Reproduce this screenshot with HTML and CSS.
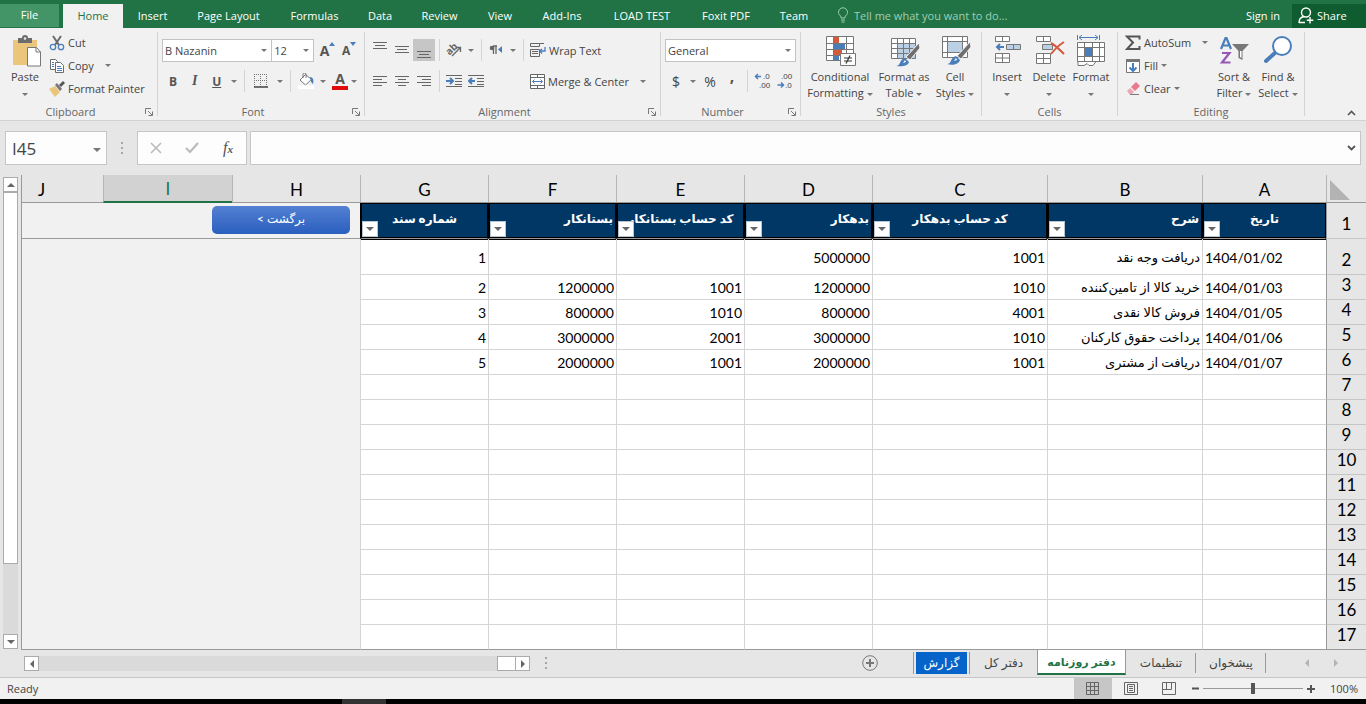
FILE: index.html
```
<!DOCTYPE html>
<html lang="en">
<head>
    <meta charset="utf-8">
    <meta name="viewport" content="width=device-width, initial-scale=1.0">
    <title>دفتر روزنامه</title>
    <link rel="stylesheet" href="styles.css">
</head>
<body>
    <nav class="tabs">
        <button class="file">File</button>
        <button class="on">Home</button>
        <button>Insert</button>
        <button>Page Layout</button>
        <button>Formulas</button>
        <button>Data</button>
        <button>Review</button>
        <button>View</button>
        <button>Add-Ins</button>
        <button>LOAD TEST</button>
        <button>Foxit PDF</button>
        <button>Team</button>
        <label class="tellme">
            <svg width="12" height="16" viewBox="0 0 12 16" fill="none" stroke="#9fd0b3"><path d="M4 11V9.500C2.500 8.500 1.500 7 1.500 5.300a4.500 4.500 0 0 1 9 0C10.500 7 9.500 8.500 8 9.500V11zM4 13h4M4.500 15h3"/></svg>
            <input type="text" placeholder="Tell me what you want to do...">
        </label>
        <a href="#" class="signin">Sign in</a>
        <button class="share">
            <svg width="16" height="17" viewBox="0 0 16 17" fill="none" stroke="#fff" stroke-width="1.400"><circle cx="8" cy="5.500" r="4.500"/><path d="M1 16c0-4 2-6 5-6.500M1 15.500h6M12 10v6.500M8.800 13.200h6.500"/></svg>
            Share
        </button>
    </nav>

    <div class="ribbon">
        <section class="group g-clip">
            <div class="body">
                <button class="big paste">
                    <svg width="32" height="32" viewBox="0 0 32 32"><path d="M4 5h24v25H4z" fill="#ecc57d"/><path d="M9 3h4a3 3 0 0 1 6 0h4v5H9z" fill="#6d6d6d"/><circle cx="16" cy="3.500" r="1.200" fill="#f1f1f1"/><path d="M18.500 12.500h9l4 4.500v14h-13z" fill="#fff" stroke="#777"/><path d="M27 12.500V17h4.500" fill="none" stroke="#777"/></svg>
                    Paste<br><i class="caret"></i>
                </button>
                <div class="stack">
                    <button class="line"><svg width="16" height="16" viewBox="0 0 16 16" fill="none"><path d="M4 1l6 9M12 1L6 10" stroke="#6b6b6b" stroke-width="2"/><circle cx="4" cy="12" r="2.700" stroke="#4a7ebb" stroke-width="1.300"/><circle cx="12" cy="12" r="2.700" stroke="#4a7ebb" stroke-width="1.300"/></svg>Cut</button>
                    <button class="line"><svg width="16" height="16" viewBox="0 0 16 16" fill="#fff" stroke="#6b6b6b"><path d="M1.500 1.500h5l2 2v8h-7z"/><path d="M6.500 4.500h5l3 3v7h-8z"/><path d="M3 4.500h2M3 6.500h2M3 8.500h2M8 8.500h4M8 10.500h5M8 12.500h5" stroke="#4a7ebb"/></svg>Copy <i class="caret wide"></i></button>
                    <button class="line"><svg width="16" height="16" viewBox="0 0 16 16"><path d="M0 8l6-3 5 6-5 5z" fill="#ecc57d"/><path d="M6 4l2-2 5 6-2 2z" fill="#777"/><path d="M10 4l4-4 2 2-4 4z" fill="#555"/></svg>Format Painter</button>
                </div>
            </div>
            <h2>Clipboard</h2>
            <button class="launch" aria-label="Clipboard options"><svg width="8" height="8" viewBox="0 0 8 8" fill="none" stroke="#777"><path d="M.5 6V.5H6M3 3l4 4M7.500 3.500v4h-4"/></svg></button>
        </section>

        <section class="group g-font">
            <div class="body rows">
                <div class="row">
                    <span class="pick name"><select aria-label="Font"><option>B Nazanin</option></select></span>
                    <span class="pick size"><select aria-label="Font size"><option>12</option></select></span>
                    <button class="ic grow" aria-label="Increase font size"><b>A</b><svg width="6" height="4" viewBox="0 0 6 4"><path d="M0 4l3-4 3 4z" fill="#4a7ebb"/></svg></button>
                    <button class="ic shrink" aria-label="Decrease font size"><b>A</b><svg width="6" height="4" viewBox="0 0 6 4"><path d="M0 0l3 4 3-4z" fill="#4a7ebb"/></svg></button>
                </div>
                <div class="row">
                    <button class="ic glyph"><b>B</b></button>
                    <button class="ic glyph italic"><b><em>I</em></b></button>
                    <button class="ic glyph"><b><u>U</u></b></button>
                    <button class="drop" aria-label="Underline styles"><i class="caret"></i></button>
                    <span class="sep"></span>
                    <button class="ic wider" aria-label="Borders"><svg width="14" height="14" viewBox="0 0 14 14" fill="none" stroke="#777"><path d="M.5 0v13M6.500 0v13M12.500 0v13M0 .5h13M0 6.500h13" stroke-dasharray="1 1"/><path d="M0 13h14" stroke="#444" stroke-width="1.500"/></svg></button>
                    <button class="drop" aria-label="Border styles"><i class="caret"></i></button>
                    <span class="sep"></span>
                    <button class="ic fill" aria-label="Fill color"><svg width="17" height="16" viewBox="0 0 17 16"><path d="M7.500 1.500l6 5-6 5.500-5.500-5z" fill="#fff" stroke="#777"/><path d="M5 5V1.500a1.500 1.500 0 0 1 3 0V5" fill="none" stroke="#777"/><path d="M12 4c3 0 4 3 3 7-2-1-2-3-3-7z" fill="#4a7ebb"/><path d="M0 12.500h16V16H0z" fill="#fff"/></svg></button>
                    <button class="drop" aria-label="Fill colors"><i class="caret"></i></button>
                    <button class="ic color" aria-label="Font color"><b>A</b></button>
                    <button class="drop" aria-label="Font colors"><i class="caret"></i></button>
                </div>
            </div>
            <h2>Font</h2>
            <button class="launch" aria-label="Font options"><svg width="8" height="8" viewBox="0 0 8 8" fill="none" stroke="#777"><path d="M.5 6V.5H6M3 3l4 4M7.500 3.500v4h-4"/></svg></button>
        </section>

        <section class="group g-align">
            <div class="body rows">
                <div class="row">
                    <button class="ic" aria-label="Top align"><svg width="14" height="16" viewBox="0 0 14 16" stroke="#666"><path d="M0 .5h14M2 3.500h10M0 6.500h14"/></svg></button>
                    <button class="ic" aria-label="Middle align"><svg width="14" height="16" viewBox="0 0 14 16" stroke="#666"><path d="M0 4.500h14M2 7.500h10M0 10.500h14"/></svg></button>
                    <button class="ic on" aria-label="Bottom align"><svg width="14" height="16" viewBox="0 0 14 16" stroke="#666"><path d="M0 9.500h14M2 12.500h10M0 15.500h14"/></svg></button>
                    <span class="sep"></span>
                    <button class="ic" aria-label="Orientation"><svg width="20" height="20" viewBox="0 0 20 20"><text x="5" y="13" transform="rotate(-45 7 10)" font-size="10" font-weight="bold" fill="#666" text-anchor="middle" dx="3">ab</text><path d="M8 16l8-8M12 7.500h4.500V12" fill="none" stroke="#666" stroke-width="1.300"/></svg></button>
                    <button class="drop" aria-label="Orientations"><i class="caret"></i></button>
                    <span class="sep"></span>
                    <button class="ic" aria-label="Text direction"><svg width="14" height="12" viewBox="0 0 14 12"><path d="M4 2h4M4.500 2v8M7 2v8" stroke="#666" stroke-width="1.300"/><circle cx="3" cy="4" r="2.300" fill="#666"/><path d="M13 2v7L9 5.500z" fill="#4a7ebb"/></svg></button>
                    <button class="drop" aria-label="Text directions"><i class="caret"></i></button>
                    <span class="sep"></span>
                    <button class="line wrap"><svg width="16" height="16" viewBox="0 0 16 16" fill="none" stroke="#666"><path d="M.5 1.500h9v3h-9zM.5 7.500h9v7h-9zM2 9.500h6M2 11.500h6M9.500 1.500H14"/><path d="M15 5v4h-5M12 7l-2.500 2L12 11.500" stroke="#4a7ebb" stroke-width="1.300"/></svg>Wrap Text</button>
                </div>
                <div class="row">
                    <button class="ic" aria-label="Align left"><svg width="14" height="12" viewBox="0 0 14 12" stroke="#666"><path d="M0 1.500h14M0 4.500h9M0 7.500h14M0 10.500h9"/></svg></button>
                    <button class="ic" aria-label="Center"><svg width="14" height="12" viewBox="0 0 14 12" stroke="#666"><path d="M0 1.500h14M3 4.500h8M0 7.500h14M3 10.500h8"/></svg></button>
                    <button class="ic" aria-label="Align right"><svg width="14" height="12" viewBox="0 0 14 12" stroke="#666"><path d="M0 1.500h14M5 4.500h9M0 7.500h14M5 10.500h9"/></svg></button>
                    <span class="sep"></span>
                    <button class="ic" aria-label="Decrease indent"><svg width="16" height="14" viewBox="0 0 16 14" stroke="#666" fill="none"><path d="M0 1.500h16M9 4.500h7M9 7.500h7M9 10.500h7M0 12.500h16"/><path d="M0 7h6M4 4l3 3-3 3" stroke="#4a7ebb" stroke-width="2"/></svg></button>
                    <button class="ic" aria-label="Increase indent"><svg width="16" height="14" viewBox="0 0 16 14" stroke="#666" fill="none"><path d="M0 1.500h16M9 4.500h7M9 7.500h7M9 10.500h7M0 12.500h16"/><path d="M7 7H1M4 4L1 7l3 3" stroke="#4a7ebb" stroke-width="2"/></svg></button>
                    <button class="line wrap merge"><svg width="15" height="15" viewBox="0 0 15 15" fill="#fff" stroke="#666"><path d="M.5.5h14v14H.5zM.5 3.500h14M.5 11.500h14M7.500.5v3M7.500 11.500v3"/><path d="M2.500 7.500h10M4.500 5.500l-2 2 2 2M10.500 5.500l2 2-2 2" fill="none" stroke="#4a7ebb"/></svg>Merge &amp; Center <i class="caret wide"></i></button>
                </div>
            </div>
            <h2>Alignment</h2>
            <button class="launch" aria-label="Alignment options"><svg width="8" height="8" viewBox="0 0 8 8" fill="none" stroke="#777"><path d="M.5 6V.5H6M3 3l4 4M7.500 3.500v4h-4"/></svg></button>
        </section>

        <section class="group g-num">
            <div class="body rows">
                <div class="row">
                    <span class="pick format"><select aria-label="Number format"><option>General</option></select></span>
                </div>
                <div class="row">
                    <button class="ic money">$</button>
                    <button class="drop" aria-label="Currencies"><i class="caret"></i></button>
                    <button class="ic money">%</button>
                    <button class="ic comma"><b>,</b></button>
                    <span class="sep"></span>
                    <button class="ic decimals" aria-label="Increase decimal"><svg width="18" height="20" viewBox="0 0 18 20"><text x="9" y="8" fill="#444">.0</text><text x="5" y="17" fill="#444">.00</text><path d="M7 5.500H1.500M4 3L1.500 5.500 4 8" fill="none" stroke="#4a7ebb" stroke-width="1.500"/></svg></button>
                    <button class="ic decimals" aria-label="Decrease decimal"><svg width="18" height="20" viewBox="0 0 18 20"><text x="5" y="8" fill="#444">.00</text><text x="9" y="17" fill="#444">.0</text><path d="M1.500 14H7M5 11.500L7.500 14 5 16.500" fill="none" stroke="#4a7ebb" stroke-width="1.500"/></svg></button>
                </div>
            </div>
            <h2>Number</h2>
            <button class="launch" aria-label="Number options"><svg width="8" height="8" viewBox="0 0 8 8" fill="none" stroke="#777"><path d="M.5 6V.5H6M3 3l4 4M7.500 3.500v4h-4"/></svg></button>
        </section>

        <section class="group g-styles">
            <div class="body">
                <button class="big cond">
                    <svg width="32" height="32" viewBox="0 0 32 32"><path d="M2.500 1.500h27v24h-27z" fill="#fff"/><path d="M10 2h5v6h-5zM10 15h8v5h-8z" fill="#d6593c"/><path d="M10 9h11v5H10zM10 21h5v5h-5z" fill="#4a7ebb"/><path d="M2.500 1.500h27v24h-27zM2.500 8.500h27M2.500 14.500h27M2.500 20.500h27M9.500 1.500v24M22.500 1.500v24" fill="none" stroke="#777"/><path d="M16.500 18.500h15v12h-15z" fill="#fff" stroke="#777"/><path d="M20 23h8M20 26h8M26 20.500l-4 8" stroke="#333" stroke-width="1.200"/></svg>
                    Conditional<br>Formatting<i class="caret"></i>
                </button>
                <button class="big table">
                    <svg width="32" height="32" viewBox="0 0 32 32"><path d="M3.500 3.500h24v20h-24z" fill="#fff"/><path d="M10 9h18v15H10z" fill="#bcd0e5"/><path d="M3.500 3.500h24v20h-24zM3.500 8.500h24M3.500 13.500h24M3.500 18.500h24M9.500 3.500v20M15.500 3.500v20M21.500 3.500v20" fill="none" stroke="#777"/><path d="M31 8l1 5-10 12-4-3z" fill="#6f6f6f" stroke="#f1f1f1"/><path d="M8 31c5 0 3-7 9-8l4 4c-1 4-7 5-13 4z" fill="#4a7ebb"/><path d="M17 25l-2 3 3-1z" fill="#fff"/></svg>
                    Format as<br>Table<i class="caret"></i>
                </button>
                <button class="big cell">
                    <svg width="32" height="32" viewBox="0 0 32 32"><path d="M3.500 2.500h24v20h-24z" fill="#fff"/><path d="M9 7h14v10H9z" fill="#bcd0e5"/><path d="M3.500 1.500h25v21h-25zM3.500 6.500h25M3.500 17.500h25M8.500 1.500v21M23.500 1.500v21" fill="none" stroke="#777"/><path d="M31 7l1 5-10 12-4-3z" fill="#6f6f6f" stroke="#f1f1f1"/><path d="M8 29c5 0 3-7 9-8l4 4c-1 4-7 6-13 4z" fill="#4a7ebb"/><path d="M17 23l-2 3 3-1z" fill="#fff"/></svg>
                    Cell<br>Styles<i class="caret"></i>
                </button>
            </div>
            <h2>Styles</h2>
        </section>

        <section class="group g-cells">
            <div class="body">
                <button class="big">
                    <svg width="32" height="32" viewBox="0 0 32 32" fill="#fff" stroke="#777"><path d="M4.500 1.500h14v5h-14zM11.500 1.500v5M4.500 18.500h14v9h-14zM11.500 18.500v9M4.500 23h14"/><path d="M15.500 9.500h14v5h-14zM22.500 9.500v5" fill="#bcd0e5"/><path d="M13 12H6M9 9l-3 3 3 3" fill="none" stroke="#4a7ebb" stroke-width="2"/></svg>
                    Insert<br><i class="caret"></i>
                </button>
                <button class="big">
                    <svg width="32" height="32" viewBox="0 0 32 32" fill="#fff" stroke="#777"><path d="M3.500 1.500h14v5h-14zM10.500 1.500v5M3.500 18.500h14v10h-14zM10.500 18.500v10M3.500 23.500h14"/><path d="M9.500 9.500h10v5h-10z" fill="#bcd0e5"/><path d="M18 8c4 2 8 6 13 11M31 7c-5 3-9 7-13 12" fill="none" stroke="#d6593c" stroke-width="2"/></svg>
                    Delete<br><i class="caret"></i>
                </button>
                <button class="big">
                    <svg width="32" height="32" viewBox="0 0 32 32" fill="#fff" stroke="#777"><path d="M2.500 7.500h27v19h-27zM2.500 12.500h27M2.500 21.500h27M9.500 7.500v19M17.500 7.500v19M24.500 7.500v19M3 26.500v4h6l3-2 2 2h4l3-4"/><path d="M10 13h7v8h-7z" fill="#4a7ebb" stroke="none"/><path d="M2.500 0v5M24.500 0v5M4 2.500h19M7 0L4 2.500 7 5M20 0l3 2.500L20 5" fill="none" stroke="#4a7ebb"/></svg>
                    Format<br><i class="caret"></i>
                </button>
            </div>
            <h2>Cells</h2>
        </section>

        <section class="group g-edit">
            <div class="body">
                <div class="stack">
                    <button class="line"><svg width="16" height="16" viewBox="0 0 16 16"><path d="M14.500 4.500V1.500H2l6 6-6 6.500h12.500v-3" fill="none" stroke="#555" stroke-width="2"/></svg>AutoSum <i class="caret wide"></i></button>
                    <button class="line"><svg width="16" height="16" viewBox="0 0 16 16"><path d="M1.500 1.500h13v13h-13z" fill="#fff" stroke="#777"/><path d="M1 1h14v3H1z" fill="#777"/><path d="M8 5v8M4.500 9.500L8 13l3.500-3.500" fill="none" stroke="#4a7ebb" stroke-width="2"/></svg>Fill<i class="caret"></i></button>
                    <button class="line"><svg width="16" height="16" viewBox="0 0 16 16"><path d="M6 6l5-5 4 4-5 5z" fill="#e8798f"/><path d="M5 7l4 4-2 2H4l-2-3z" fill="#f0a5b2"/><path d="M5 13.500h9" stroke="#777"/></svg>Clear<i class="caret"></i></button>
                </div>
                <button class="big">
                    <svg width="32" height="32" viewBox="0 0 32 32"><path d="M3 14L7.500 3h1L13 14M5 10.500h6" fill="none" stroke="#4a7ebb" stroke-width="2.200"/><path d="M4 18h7.500L4 27.500h8.500" fill="none" stroke="#9559b5" stroke-width="2.200"/><path d="M14 9h17l-6.500 7v9l-4-2v-7z" fill="#777"/><path d="M22 16h1.500v7l-1.500-1z" fill="#fff"/></svg>
                    Sort &amp;<br>Filter<i class="caret"></i>
                </button>
                <button class="big">
                    <svg width="32" height="32" viewBox="0 0 32 32"><path d="M14 17L4 26" stroke="#4a7ebb" stroke-width="4" stroke-linecap="round"/><circle cx="20" cy="11" r="9" fill="#fff" stroke="#4a7ebb" stroke-width="2"/></svg>
                    Find &amp;<br>Select<i class="caret"></i>
                </button>
            </div>
            <h2>Editing</h2>
        </section>
        <button class="collapse" aria-label="Collapse the ribbon"><svg width="9" height="6" viewBox="0 0 9 6"><path d="M1 5l3.500-3.500L8 5" fill="none" stroke="#555" stroke-width="1.600"/></svg></button>
    </div>

    <div class="formulabar">
        <div class="namebox">
            <input type="text" value="I45" aria-label="Name box">
            <button aria-label="Names"><i class="caret big-caret"></i></button>
        </div>
        <span class="dots"></span>
        <div class="fx">
            <button aria-label="Cancel"><svg width="12" height="12" viewBox="0 0 12 12"><path d="M1 1l10 10M11 1L1 11" stroke="#bbb" stroke-width="1.600"/></svg></button>
            <button aria-label="Enter"><svg width="14" height="12" viewBox="0 0 14 12"><path d="M1 6l4 4 8-9" fill="none" stroke="#bbb" stroke-width="2.200"/></svg></button>
            <button class="fn"><em>f<small>x</small></em></button>
        </div>
        <div class="formula">
            <input type="text" aria-label="Formula">
            <button aria-label="Expand"><svg width="9" height="6" viewBox="0 0 9 6"><path d="M1 1l3.500 3.500L8 1" fill="none" stroke="#555" stroke-width="1.800"/></svg></button>
        </div>
    </div>

    <main class="work">
        <div class="vscroll">
            <button aria-label="Scroll up"><i class="tri up"></i></button>
            <span class="thumb"></span>
            <span class="track"></span>
            <button aria-label="Scroll down"><i class="tri down"></i></button>
        </div>
        <table class="sheet" dir="rtl">
            <colgroup>
                <col class="w-num"><col class="w-a"><col class="w-b"><col class="w-c">
                <col class="w-d"><col class="w-d"><col class="w-d"><col class="w-d"><col class="w-d">
                <col class="w-i"><col>
            </colgroup>
            <thead>
                <tr class="letters">
                    <th class="corner"><svg width="20" height="20" viewBox="0 0 20 20"><path d="M0 0v20h20z" fill="#b3b3b3"/></svg></th>
                    <th>A</th><th>B</th><th>C</th><th>D</th><th>E</th><th>F</th><th>G</th><th>H</th><th class="sel">I</th><th class="j">J</th>
                </tr>
            </thead>
            <tbody>
                <tr class="titles">
                    <th>1</th>
                    <td class="mid">تاریخ<button aria-label="Filter"><i class="tri down"></i></button></td>
                    <td>شرح<button aria-label="Filter"><i class="tri down"></i></button></td>
                    <td class="mid">کد حساب بدهکار<button aria-label="Filter"><i class="tri down"></i></button></td>
                    <td>بدهکار<button aria-label="Filter"><i class="tri down"></i></button></td>
                    <td class="mid">کد حساب بستانکار<button aria-label="Filter"><i class="tri down"></i></button></td>
                    <td>بستانکار<button aria-label="Filter"><i class="tri down"></i></button></td>
                    <td class="mid">شماره سند<button aria-label="Filter"><i class="tri down"></i></button></td>
                    <td class="off" colspan="3"><a href="#" class="back">برگشت &gt;</a></td>
                </tr>
                <tr class="first"><th>2</th><td class="date">1404/01/02</td><td class="note">دریافت وجه نقد</td><td>1001</td><td>5000000</td><td></td><td></td><td>1</td><td class="off" colspan="3"></td></tr>
                <tr><th>3</th><td class="date">1404/01/03</td><td class="note">خرید کالا از تامین‌کننده</td><td>1010</td><td>1200000</td><td>1001</td><td>1200000</td><td>2</td><td class="off" colspan="3"></td></tr>
                <tr><th>4</th><td class="date">1404/01/05</td><td class="note">فروش کالا نقدی</td><td>4001</td><td>800000</td><td>1010</td><td>800000</td><td>3</td><td class="off" colspan="3"></td></tr>
                <tr><th>5</th><td class="date">1404/01/06</td><td class="note">پرداخت حقوق کارکنان</td><td>1010</td><td>3000000</td><td>2001</td><td>3000000</td><td>4</td><td class="off" colspan="3"></td></tr>
                <tr><th>6</th><td class="date">1404/01/07</td><td class="note">دریافت از مشتری</td><td>1001</td><td>2000000</td><td>1001</td><td>2000000</td><td>5</td><td class="off" colspan="3"></td></tr>
                <tr><th>7</th><td></td><td></td><td></td><td></td><td></td><td></td><td></td><td class="off" colspan="3"></td></tr>
                <tr><th>8</th><td></td><td></td><td></td><td></td><td></td><td></td><td></td><td class="off" colspan="3"></td></tr>
                <tr><th>9</th><td></td><td></td><td></td><td></td><td></td><td></td><td></td><td class="off" colspan="3"></td></tr>
                <tr><th>10</th><td></td><td></td><td></td><td></td><td></td><td></td><td></td><td class="off" colspan="3"></td></tr>
                <tr><th>11</th><td></td><td></td><td></td><td></td><td></td><td></td><td></td><td class="off" colspan="3"></td></tr>
                <tr><th>12</th><td></td><td></td><td></td><td></td><td></td><td></td><td></td><td class="off" colspan="3"></td></tr>
                <tr><th>13</th><td></td><td></td><td></td><td></td><td></td><td></td><td></td><td class="off" colspan="3"></td></tr>
                <tr><th>14</th><td></td><td></td><td></td><td></td><td></td><td></td><td></td><td class="off" colspan="3"></td></tr>
                <tr><th>15</th><td></td><td></td><td></td><td></td><td></td><td></td><td></td><td class="off" colspan="3"></td></tr>
                <tr><th>16</th><td></td><td></td><td></td><td></td><td></td><td></td><td></td><td class="off" colspan="3"></td></tr>
                <tr class="end"><th>17</th><td></td><td></td><td></td><td></td><td></td><td></td><td></td><td class="off" colspan="3"></td></tr>
            </tbody>
        </table>
    </main>

    <div class="bottom">
        <div class="hscroll">
            <button aria-label="Scroll left"><i class="tri left"></i></button>
            <span class="track"></span>
            <span class="thumb"></span>
            <button aria-label="Scroll right"><i class="tri right"></i></button>
        </div>
        <div class="sheets" dir="rtl">
            <button class="nav" aria-label="Next sheet"><i class="tri right"></i></button>
            <button class="nav" aria-label="Previous sheet"><i class="tri left"></i></button>
            <button class="tab t1">پیشخوان</button>
            <button class="tab t2">تنظیمات</button>
            <button class="tab active">دفتر روزنامه</button>
            <button class="tab t4">دفتر کل</button>
            <button class="tab blue"><span>گزارش</span></button>
            <button class="add" aria-label="New sheet"><svg width="16" height="16" viewBox="0 0 16 16" fill="none" stroke="#777"><circle cx="8" cy="8" r="7.300"/><path d="M8 4v8M4 8h8" stroke-width="2"/></svg></button>
            <span class="dots"></span>
        </div>
    </div>

    <footer class="status">
        <span>Ready</span>
        <div class="views">
            <button class="on" aria-label="Normal"><svg width="14" height="13" viewBox="0 0 14 13" fill="none" stroke="#666"><path d="M.5.5h12v12H.5zM.5 4.500h12M.5 8.500h12M4.500.5v12M8.500.5v12"/></svg></button>
            <button aria-label="Page layout"><svg width="14" height="13" viewBox="0 0 14 13" fill="none" stroke="#666"><path d="M.5.5h13v12H.5zM3.500 2.500h7v8h-7zM5 4.500h4M5 6.500h4M5 8.500h4"/></svg></button>
            <button aria-label="Page break preview"><svg width="14" height="13" viewBox="0 0 14 13" fill="none" stroke="#666"><path d="M.5.5h13v12H.5zM.5 7.500h9v-7M4.500.5v7"/></svg></button>
        </div>
        <button class="zoom" aria-label="Zoom out"><svg width="7" height="7" viewBox="0 0 7 7"><path d="M0 3.500h7" stroke="#555" stroke-width="2"/></svg></button>
        <input type="range" min="0" max="100" value="50" aria-label="Zoom">
        <button class="zoom" aria-label="Zoom in"><svg width="8" height="8" viewBox="0 0 8 8"><path d="M0 4h8M4 0v8" stroke="#555" stroke-width="2"/></svg></button>
        <span class="percent">100%</span>
    </footer>
    <div class="taskbar"><span></span></div>
</body>
</html>
```
FILE: styles.css
```
* {
    box-sizing: border-box;
}

body {
    margin: 0;
    min-height: 100vh;
    display: flex;
    flex-direction: column;
    overflow: hidden;
    font-family: "Open Sans", "DejaVu Sans", sans-serif;
    font-size: 11px;
    color: #444;
    background-color: #e6e6e6;
}

button, input, select {
    font: inherit;
    color: inherit;
    margin: 0;
    padding: 0;
    border: 0;
    border-radius: 0;
    background: none;
    outline: none;
}

button {
    white-space: nowrap;
}

svg {
    display: block;
    flex: none;
}

/* ribbon tabs */
.tabs {
    height: 28px;
    padding-top: 4px;
    display: grid;
    grid-template-columns: 59px 68px 51px 101px 71px 60px 59px 62px 62px 98px 70px 66px 1fr 46px 74px;
    background-color: #217346;
    color: #fff;
}

.tabs button, .tellme {
    padding-bottom: 2px;
}

.tabs .file {
    background-color: #439467;
    border-bottom: 1px solid #217346;
}

.tabs .on {
    margin: 0 4px;
    background-color: #f1f1f1;
    color: #217346;
}

.tellme {
    display: flex;
    align-items: center;
    gap: 5px;
    padding-left: 10px;
}

.tellme input {
    width: 200px;
}

.tellme input::placeholder {
    color: #a0cdb3;
}

.signin {
    color: #fff;
    text-decoration: none;
    line-height: 24px;
}

.share {
    display: flex;
    align-items: center;
    gap: 3px;
    padding-left: 6px;
    background-color: #0e5c2f;
}

/* ribbon */
.ribbon {
    height: 93px;
    display: flex;
    position: relative;
    background-color: #f1f1f1;
    border-bottom: 1px solid #d2d2d2;
}

.group {
    position: relative;
    flex: none;
    margin: 4px 0 4px;
    padding: 0 4px;
    border-right: 1px solid #d4d4d4;
}

.g-clip { width: 158px; }
.g-font { width: 207px; }
.g-align { width: 296px; }
.g-num { width: 140px; }
.g-styles { width: 181px; }
.g-cells { width: 136px; }
.g-edit { width: 187px; }

.group .body {
    height: 72px;
    display: flex;
}

.group .rows {
    flex-direction: column;
    gap: 9px;
    padding-top: 7px;
}

.group h2 {
    margin: 0;
    padding-right: 16px;
    font-size: 11px;
    font-weight: normal;
    line-height: 16px;
    text-align: center;
    color: #666;
}

.g-styles h2, .g-cells h2, .g-edit h2 {
    padding-right: 0;
}

.launch {
    position: absolute;
    right: 4px;
    bottom: 0;
}

.row {
    display: flex;
    align-items: center;
    height: 22px;
}

.caret {
    display: inline-block;
    flex: none;
    border: 3px solid transparent;
    border-top-color: #777;
    border-bottom: 0;
    margin-left: 3px;
    vertical-align: middle;
}

.line .caret {
    margin-left: 0;
}

.line .wide {
    margin-left: 8px;
}

.big-caret {
    border-width: 4px;
    border-bottom: 0;
}

.big {
    flex: none;
    width: 42px;
    height: 70px;
    padding-top: 2px;
    line-height: 16px;
    text-align: center;
    display: block;
}

.big svg {
    margin: 0 auto 2px;
}

.paste .caret, .g-cells .caret {
    margin: 0;
}

.cond { width: 70px; }
.table { width: 58px; }
.cell { width: 44px; }

.g-edit .big {
    width: 44px;
}

.line {
    display: flex;
    align-items: center;
    gap: 3px;
}

.stack {
    padding-left: 3px;
}

.stack .line {
    height: 23px;
    padding-bottom: 2px;
}

.g-edit .stack {
    width: 91px;
}

.ic {
    width: 22px;
    height: 22px;
    display: flex;
    align-items: center;
    justify-content: center;
}

.ic.on {
    background-color: #c6c6c6;
}

.ic b {
    color: #555;
}

.wider {
    width: 26px;
}

.glyph {
    font-size: 12px;
}

.italic {
    font-family: "Liberation Serif", serif;
    font-size: 14px;
}

.drop {
    width: 12px;
    height: 22px;
    display: flex;
    align-items: center;
    justify-content: center;
}

.drop .caret {
    margin: 0;
}

.sep {
    width: 1px;
    height: 22px;
    margin: 0 4px;
    background-color: #d4d4d4;
}

.g-align .sep {
    margin: 0 3px 0 4px;
}

.wrap {
    padding-left: 3px;
}

.merge {
    margin-left: 40px;
}

.grow, .shrink {
    font-size: 14px;
}

.grow {
    margin-left: 3px;
}

.shrink {
    font-size: 12px;
}

.grow svg, .shrink svg {
    margin-bottom: 12px;
}

.color {
    font-size: 14px;
    line-height: 14px;
    border-bottom: 4px solid #e00b0b;
    width: 16px;
    height: 18px;
    margin-left: 3px;
}

.money {
    font-size: 14px;
}

.comma {
    font-size: 16px;
    line-height: 12px;
    align-items: flex-start;
}

.decimals {
    font-family: "Liberation Sans", sans-serif;
    font-size: 8px;
}

.pick {
    position: relative;
    height: 23px;
    border: 1px solid #c3c3c3;
    background-color: #fff;
}

.pick select {
    appearance: none;
    width: 100%;
    height: 21px;
    padding-left: 2px;
}

.pick::after {
    content: "";
    position: absolute;
    right: 4px;
    top: 9px;
    border: 3px solid transparent;
    border-top-color: #777;
    border-bottom: 0;
    pointer-events: none;
}

.name { width: 112px; }
.size { width: 43px; margin-left: -1px; }
.format { width: 132px; }

.collapse {
    margin: auto 10px 4px auto;
}

/* formula bar */
.formulabar {
    height: 54px;
    display: flex;
    align-items: flex-start;
    padding: 10px 5px 0;
}

.namebox, .fx, .formula {
    height: 34px;
    display: flex;
    align-items: center;
    border: 1px solid #c6c6c6;
    background-color: #fdfdfd;
}

.namebox {
    width: 102px;
    padding-right: 5px;
}

.namebox input {
    flex: 1;
    min-width: 0;
    padding-left: 6px;
    font-size: 17px;
}

.dots {
    width: 2px;
    height: 12px;
    margin: 11px 14px;
    background: repeating-linear-gradient(#a6a6a6 0 2px, transparent 2px 5px);
}

.fx {
    width: 110px;
    margin-right: 3px;
}

.fx button {
    flex: 1;
    display: flex;
    justify-content: center;
}

.fn {
    font-family: "Liberation Serif", serif;
    font-size: 16px;
    color: #555;
}

.fn small {
    font-size: 11px;
    font-weight: bold;
}

.formula {
    flex: 1;
    padding-right: 4px;
}

.formula input {
    flex: 1;
}

/* sheet */
.work {
    display: flex;
}

.tri {
    display: block;
    border: 4px solid transparent;
}

.up { border-top: 0; border-bottom-color: #666; }
.down { border-bottom: 0; border-top-color: #666; }
.left { border-left: 0; border-right-color: #666; }
.right { border-right: 0; border-left-color: #666; }

.vscroll {
    flex: none;
    width: 15px;
    margin: 2px 3px 1px;
    display: flex;
    flex-direction: column;
    background-color: #dadada;
}

.vscroll button, .hscroll button {
    width: 15px;
    height: 15px;
    display: flex;
    align-items: center;
    justify-content: center;
    border: 1px solid #ababab;
    background-color: #fff;
}

.vscroll .thumb {
    flex: 373;
    border: 1px solid #ababab;
    background-color: #fff;
}

.vscroll .track {
    flex: 70;
}

.sheet {
    flex: 1;
    width: 100%;
    min-width: 0;
    table-layout: fixed;
    border-spacing: 0;
    border-left: 1px solid #999;
    background-color: #fff;
    color: #000;
    font-family: Lato, "DejaVu Sans", sans-serif;
    font-size: 14px;
}

.w-num { width: 40px; }
.w-a { width: 124px; }
.w-b { width: 155px; }
.w-c { width: 175px; }
.w-d { width: 128px; }
.w-i { width: 129px; }

.sheet th {
    padding: 0 0 4px;
    font-size: 17px;
    font-weight: normal;
    line-height: 20px;
    background-color: #e6e6e6;
    border-left: 1px solid #999;
    border-bottom: 1px solid #c6c6c6;
}

.sheet td {
    height: 25px;
    padding: 2px 2px 0;
    line-height: 22px;
    text-align: right;
    white-space: nowrap;
    overflow: hidden;
    border-left: 1px solid #d4d4d4;
    border-bottom: 1px solid #d4d4d4;
}

.sheet .date {
    text-align: left;
}

.sheet .note {
    padding-top: 0;
    font-size: 13px;
}

.sheet .letters th {
    height: 28px;
    padding: 2px 0 0;
    border-left-color: #b5b5b5;
    border-bottom-color: #999;
}

.letters .corner svg {
    margin: 0 auto 0 3px;
}

.sheet .letters .sel {
    color: #217346;
    background-color: #d2d2d2;
    border-bottom: 2px solid #217346;
}

.sheet .letters .j {
    padding-right: 0;
    padding-left: 0;
    text-align: left;
    text-indent: 16px;
    direction: ltr;
    border-left: 0;
}

.sheet .off {
    background-color: #f1f1f1;
    border-left: 0;
    border-bottom-color: #f1f1f1;
}

.titles th {
    vertical-align: bottom;
}

.sheet .titles td {
    position: relative;
    height: 36px;
    padding: 0 2px 4px;
    color: #fff;
    font-size: 12px;
    font-weight: bold;
    background-color: #003764;
    border: 2px solid #000;
    border-width: 1px 1px 1px 2px;
    border-bottom-color: #999;
    box-shadow: inset 0 -1px #000;
}

.sheet .titles .mid {
    text-align: center;
}

.titles td button {
    position: absolute;
    left: 0;
    bottom: 1px;
    width: 16px;
    height: 16px;
    display: flex;
    align-items: center;
    justify-content: center;
    background-color: #fff;
    border: 1px solid #b8c4d0;
}

.sheet .titles .off {
    padding: 0 10px 2px 0;
    background-color: #f1f1f1;
    border-width: 0 0 1px;
    border-color: #999;
    box-shadow: none;
}

.back {
    display: block;
    width: 138px;
    height: 28px;
    line-height: 26px;
    border-radius: 5px;
    font-weight: normal;
    text-align: center;
    text-decoration: none;
    color: #fff;
    background: linear-gradient(#5380d2, #2a5fbf);
}

.sheet .first td {
    height: 36px;
    box-shadow: inset 0 1px #000;
}

.sheet .first .off {
    box-shadow: none;
}

.sheet .first th {
    vertical-align: bottom;
}

.sheet .end td, .sheet .end th {
    border-bottom-color: #999;
}

/* sheet tabs */
.bottom {
    height: 27px;
    display: flex;
}

.hscroll {
    flex: 1;
    height: 15px;
    margin: 6px 0 0 24px;
    display: flex;
    background-color: #dadada;
}

.hscroll .track {
    flex: 1;
}

.hscroll .thumb {
    width: 18px;
    border: 1px solid #ababab;
    border-right: 0;
    background-color: #fff;
}

.sheets {
    flex: none;
    display: flex;
    align-items: center;
    width: 836px;
    height: 25px;
    font-size: 12px;
}

.nav {
    width: 29px;
    display: flex;
    justify-content: center;
    opacity: 0.4;
}

.nav:first-child {
    margin-right: 16px;
}

.nav + .tab {
    margin-right: 26px;
}

.tab {
    height: 25px;
    line-height: 22px;
}

.t1, .t2 {
    width: 70px;
    border: 0 solid #999;
    background: linear-gradient(#999, #999) right center / 1px 20px no-repeat;
}

.t4 { width: 67px; }

.active {
    width: 89px;
    color: #217346;
    font-weight: bold;
    font-size: 11px;
    background-color: #fff;
    border: 1px solid #999;
    border-width: 0 1px;
    border-bottom: 2px solid #217346;
}

.blue {
    width: 57px;
    height: 22px;
    padding: 0 2px;
    border: 1px solid #999;
    border-width: 0 1px;
}

.blue span {
    display: block;
    color: #fff;
    background-color: #0563c9;
}

.add {
    margin-right: 35px;
}

.sheets .dots {
    margin: 0 auto 0 15px;
}

/* status bar */
.status {
    height: 22px;
    display: flex;
    align-items: center;
    padding: 0 8px 0 7px;
    background-color: #f1f1f1;
    border-top: 1px solid #c6c6c6;
}

.views {
    margin-left: auto;
    display: flex;
}

.views button {
    width: 38px;
    height: 21px;
    display: flex;
    align-items: center;
    justify-content: center;
}

.views .on {
    background-color: #c6c6c6;
}

.zoom {
    width: 15px;
    display: flex;
    justify-content: center;
}

.status input {
    appearance: none;
    width: 100px;
    height: 12px;
    background: linear-gradient(#999, #999) center / 100% 1px no-repeat;
}

.status input::-webkit-slider-thumb {
    appearance: none;
    width: 4px;
    height: 11px;
    background-color: #555;
}

.percent {
    width: 40px;
    text-align: right;
}

.taskbar {
    flex: 1;
    background-color: #000;
}

.taskbar span {
    display: block;
    width: 44px;
    height: 5px;
    margin-left: 342px;
    background-color: #333;
}
```
